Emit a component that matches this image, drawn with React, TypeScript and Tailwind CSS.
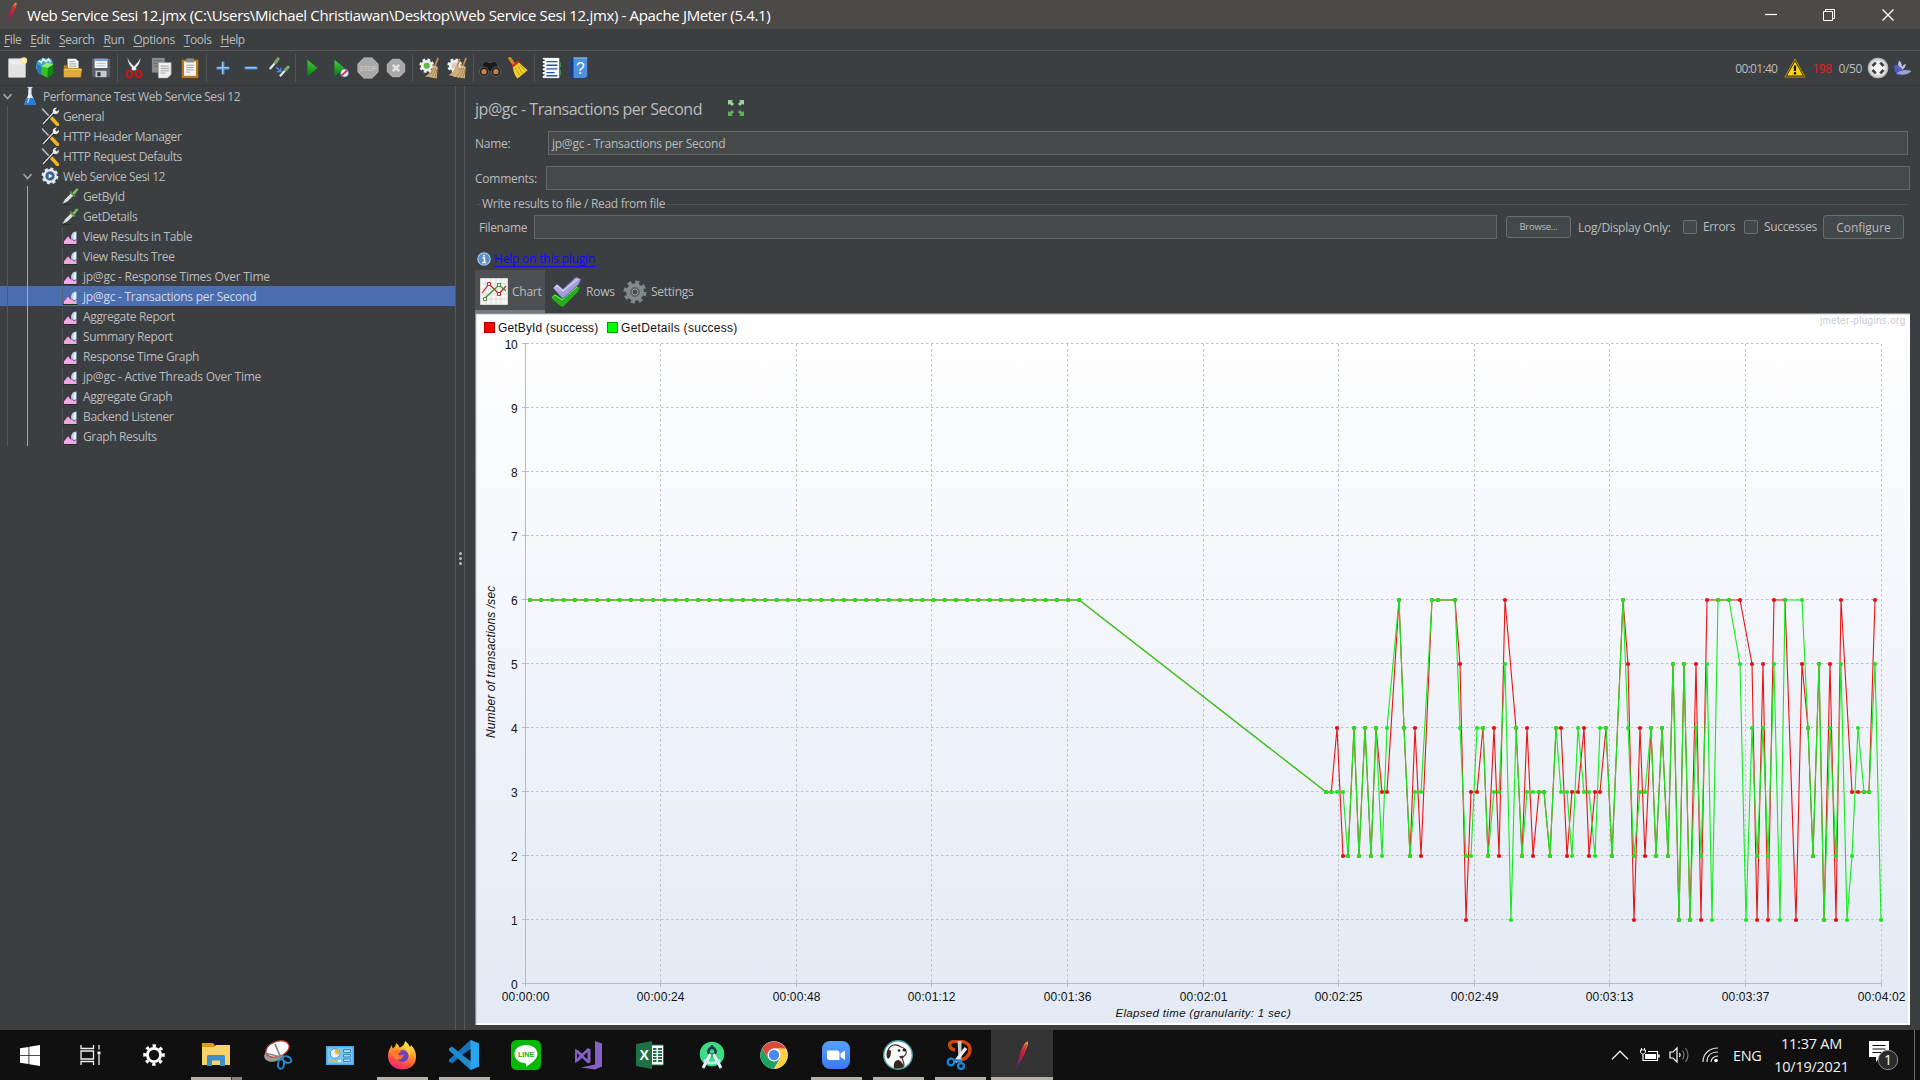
import React from "react";
import type { ReactNode } from "react";

type P = { w?: number; h?: number; box?: string; children?: ReactNode; cls?: string };
const Svg = ({ w = 24, h = 24, box = "0 0 24 24", children, cls = "" }: P) => (
  <svg width={w} height={h} viewBox={box} fill="none" className={"block shrink-0 " + cls}>
    {children}
  </svg>
);

/* ---------- Gradients shared by the icons ---------- */
const Defs = () => (
  <svg width="0" height="0" className="absolute">
    <defs>
      <linearGradient id="feather" x1="0.8" y1="0" x2="0.2" y2="1">
        <stop offset="0" stopColor="#f69923" />
        <stop offset="0.35" stopColor="#e0273a" />
        <stop offset="0.65" stopColor="#be202e" />
        <stop offset="1" stopColor="#6b2f86" />
      </linearGradient>
      <linearGradient id="green" x1="0" y1="0" x2="0" y2="1">
        <stop offset="0" stopColor="#3fcf3a" />
        <stop offset="1" stopColor="#0a7a12" />
      </linearGradient>
      <linearGradient id="fox" x1="0.7" y1="0" x2="0.3" y2="1">
        <stop offset="0" stopColor="#fff14a" />
        <stop offset="0.4" stopColor="#ff9a28" />
        <stop offset="0.75" stopColor="#ff4a45" />
        <stop offset="1" stopColor="#e8257a" />
      </linearGradient>
      <linearGradient id="zoom" x1="0" y1="0" x2="0" y2="1">
        <stop offset="0" stopColor="#5aa0ff" />
        <stop offset="1" stopColor="#3a7af2" />
      </linearGradient>
      <linearGradient id="plot" x1="0" y1="0" x2="0" y2="1">
        <stop offset="0" stopColor="#ffffff" />
        <stop offset="1" stopColor="#e3eaf5" />
      </linearGradient>
      <linearGradient id="lilac" x1="0" y1="0" x2="1" y2="1">
        <stop offset="0" stopColor="#c9c4ee" />
        <stop offset="1" stopColor="#8b84c8" />
      </linearGradient>
      <radialGradient id="silver">
        <stop offset="0.5" stopColor="#f4f4f4" />
        <stop offset="0.85" stopColor="#cfcfcf" />
        <stop offset="1" stopColor="#8e8e8e" />
      </radialGradient>
    </defs>
  </svg>
);

const Feather = ({ w, h }: { w: number; h: number }) => (
  <Svg w={w} h={h} box="0 0 14 32">
    <path d="M13.500 0.500C10.500 1 7.500 6 5.500 12 4 17 2.300 22 2 26 5 24 8.500 18 10.500 12 12 8 14.500 3.500 13.500 0.500Z" fill="url(#feather)" />
    <path d="M12 4C9 10 5 18 3 25L0.800 31" stroke="#7a2a60" strokeWidth="0.900" />
  </Svg>
);

/* ---------- Toolbar icons ---------- */
const NewDoc = () => (
  <Svg>
    <path d="M3 2h18v20H3z" fill="#ededed" stroke="#cfcfcf" />
    <path d="M4 8h16v13H4z" fill="#e2e2e2" />
    <circle cx="19.500" cy="4" r="3.600" fill="#f3ea8d" />
    <circle cx="19.500" cy="4" r="1.500" fill="#fffde0" />
  </Svg>
);
const Templates = () => (
  <Svg>
    <path d="M3 5l6-4 10 1 2 5-3 9-12 3-4-7z" fill="#3f9ed8" />
    <path d="M5 4l3 2 2-4 3 3 3-3 2 4" stroke="#e9f2dd" strokeWidth="1.700" />
    <path d="M3 8l5 2v10l-4-3z" fill="#2777b5" />
    <path d="M8 10l7 2v11l-7-4z" fill="#35c11f" />
    <path d="M15 12l6-4v10l-6 5z" fill="#128a12" />
    <path d="M8 10l6-4 7 2-6 4z" fill="#8af06c" />
  </Svg>
);
const Open = () => (
  <Svg>
    <path d="M6 2h9l3 3v8H6z" fill="#f5f5f5" />
    <path d="M8 5h6M8 7.500h8M8 10h8" stroke="#999" />
    <path d="M2 9h4l1 3h14v10H2z" fill="#b87c1b" />
    <path d="M2 13h17l3 0-2 9H2z" fill="#e0a93c" />
    <path d="M2 13.500h19" stroke="#f6d283" />
  </Svg>
);
const Save = () => (
  <Svg>
    <path d="M2 2h20v20H4l-2-2z" fill="#555c66" />
    <path d="M5 2h14v10H5z" fill="#f4f6fa" />
    <path d="M5 2h14v2.500H5z" fill="#7aa3dc" />
    <path d="M7 7h10M7 9.500h10" stroke="#b5bac4" />
    <path d="M6 15h12v7H6z" fill="#c6c9ce" />
    <path d="M8 16.500h3.500V21H8z" fill="#30343b" />
  </Svg>
);
const Cut = () => (
  <Svg>
    <path d="M5 1c0 5 3 9 8 14l2-2C11 9 7 6 5 1Z" fill="#dfe2e6" />
    <path d="M19 1c0 5-3 9-8 14l-2-2C13 9 17 6 19 1Z" fill="#f5f6f7" />
    <ellipse cx="7" cy="18.500" rx="3" ry="3.600" stroke="#d31217" strokeWidth="2.300" transform="rotate(25 7 18.500)" />
    <ellipse cx="17" cy="18.500" rx="3" ry="3.600" stroke="#d31217" strokeWidth="2.300" transform="rotate(-25 17 18.500)" />
  </Svg>
);
const Copy = () => (
  <Svg>
    <path d="M1 1h14v16H1z" fill="#8b8b8b" />
    <path d="M3 4h9M3 7h9M3 10h6" stroke="#6c6c6c" />
    <path d="M8 6h14v13l-4 4H8z" fill="#eeeeee" stroke="#999" strokeWidth="0.700" />
    <path d="M10.500 10h9M10.500 12.500h9M10.500 15h9M10.500 17.500h5" stroke="#9b9b9b" />
  </Svg>
);
const Paste = () => (
  <Svg>
    <path d="M3 3h18v20H3z" fill="#b7791c" />
    <path d="M5.500 5h13v15.500h-13z" fill="#f4f4f4" />
    <path d="M8 1.500h8V6H8z" fill="#8d8d8d" />
    <path d="M8 9h8M8 11.500h8M8 14h8M8 16.500h4" stroke="#999" />
  </Svg>
);
const Plus = () => (
  <Svg>
    <path d="M5 12h14M12 5v14" stroke="#5d9be8" strokeWidth="3" />
    <path d="M6 11.600h12M11.600 6v12" stroke="#a6cdfb" strokeWidth="1" />
  </Svg>
);
const Minus = () => (
  <Svg>
    <path d="M5 12h14" stroke="#5d9be8" strokeWidth="3" />
    <path d="M6 11.600h12" stroke="#a6cdfb" />
  </Svg>
);
const Toggle = () => (
  <Svg>
    <path d="M2 13L9 5" stroke="#e3e8ea" strokeWidth="2.400" />
    <path d="M8 6l3-4" stroke="#7aa861" strokeWidth="3.400" strokeLinecap="round" />
    <path d="M13 21l7-8" stroke="#e3e8ea" strokeWidth="2.400" />
    <path d="M19 14l3-3" stroke="#7aa861" strokeWidth="3.400" strokeLinecap="round" />
    <path d="M9 11l4.500 4.500M14 11.500V16H9.500" stroke="#4b8cf0" strokeWidth="1.500" />
  </Svg>
);
const Play = () => (
  <Svg>
    <path d="M7 3l11 9-11 9.500z" fill="url(#green)" />
  </Svg>
);
const PlayNoPause = () => (
  <Svg>
    <path d="M6 3l11 9-11 9.500z" fill="url(#green)" />
    <circle cx="17" cy="17.500" r="4.300" fill="#e8eefb" stroke="#5e82cf" strokeWidth="0.800" />
    <path d="M14 20l6-5.500" stroke="#d9322f" strokeWidth="2" />
  </Svg>
);
const Stop = () => (
  <Svg>
    <path d="M7.500 1h9L23 7.500v9L16.500 23h-9L1 16.500v-9z" fill="#a9a9a9" stroke="#bbb" />
    <text x="12" y="15" textAnchor="middle" fontSize="7.500" fontWeight="700" fontFamily="Liberation Sans, sans-serif" fill="#c4c4c4">STOP</text>
  </Svg>
);
const Shutdown = () => (
  <Svg>
    <path d="M8 2.500h8l5.500 5.500v8L16 21.500H8L2.500 16V8z" fill="#a9a9a9" stroke="#bbb" />
    <path d="M8.500 8.500l7 7M15.500 8.500l-7 7" stroke="#e4e4e4" strokeWidth="2.800" />
  </Svg>
);
const GearBroom = ({ two = false }: { two?: boolean }) => (
  <Svg>
    <circle cx="9.500" cy="9.500" r="6.300" fill="#e9e9e9" stroke="#efefef" strokeWidth="3.500" strokeDasharray="2.700 2.250" />
    <circle cx="9.500" cy="9.500" r="3.300" fill={two ? "#d9cdb4" : "#5cba3f"} />
    <path d="M22 1l-3.500 9" stroke="#b98c4f" strokeWidth="2" />
    {two && <path d="M15 2l-3 9" stroke="#b98c4f" strokeWidth="2" />}
    {two && <path d="M11 9l4 1.500-1 12-11-3c4-2 7-6 8-10.500Z" fill="#cfae7d" />}
    <path d="M16.500 9l5 1.500-1 13-13-2.500c5-2 8-7 9-12Z" fill="#d3b483" />
    <path d="M17 12c-1 4-3 7-6 9.500M19 12c-.5 4-2 7-4 10M21 13l-2.500 9.500" stroke="#94713f" strokeWidth="0.800" />
  </Svg>
);
const Binoculars = () => (
  <Svg>
    <path d="M4 8c1-4 5-4 6-2h4c1-2 5-2 6 2l3 8H1z" fill="#17191b" stroke="#5c5f61" strokeWidth="0.800" />
    <circle cx="5.500" cy="16" r="5" fill="#1c1e20" stroke="#777" strokeWidth="0.700" />
    <circle cx="18.500" cy="16" r="5" fill="#1c1e20" stroke="#777" strokeWidth="0.700" />
    <circle cx="5.500" cy="16" r="2.900" fill="#c87f50" />
    <circle cx="18.500" cy="16" r="2.900" fill="#c87f50" />
  </Svg>
);
const Broom = () => (
  <Svg>
    <path d="M3 1.500l5 7" stroke="#d98a1b" strokeWidth="3.400" strokeLinecap="round" />
    <path d="M6.500 9.500l6-4 10 9-11 9c-3-3-5-8.500-5-14Z" fill="#f2cf2c" />
    <path d="M9 12l5 8M12 10l5 8M14 8l6 7" stroke="#b98d0f" strokeWidth="0.900" />
    <path d="M5.500 10.500l7.500-6" stroke="#d92a1c" strokeWidth="2.600" />
  </Svg>
);
const LogList = () => (
  <Svg>
    <path d="M3 1h18v22H3z" fill="#f7f9fd" />
    <path d="M7 5h12M7 9h12M7 13h12M7 17h9M7 20.500h12" stroke="#2b50a8" strokeWidth="1.500" />
    <path d="M1.500 3.500h3.500M1.500 7.500h3.500M1.500 11.500h3.500M1.500 15.500h3.500M1.500 19.500h3.500" stroke="#20242b" strokeWidth="1.500" />
    <path d="M22 6v5M22 14v6" stroke="#2f9e4c" strokeWidth="1.600" />
  </Svg>
);
const HelpBook = () => (
  <Svg>
    <path d="M2 1h19v20l-3 2H2z" fill="#4f8fe0" />
    <path d="M2 1h4v22H2z" fill="#1c3f80" />
    <path d="M6 1h15" stroke="#a9ceff" />
    <text x="13.300" y="18" textAnchor="middle" fontSize="17" fontFamily="Liberation Sans, sans-serif" fill="#fff">?</text>
  </Svg>
);

const toolGroups: ReactNode[][] = [
  [<NewDoc />, <Templates />, <Open />, <Save />],
  [<Cut />, <Copy />, <Paste />],
  [<Plus />, <Minus />, <Toggle />],
  [<Play />, <PlayNoPause />, <Stop />, <Shutdown />],
  [<GearBroom />, <GearBroom two />],
  [<Binoculars />, <Broom />],
  [<LogList />, <HelpBook />],
];

/* ---------- Tree ---------- */
const Flask = () => (
  <Svg w={16} h={20} box="0 0 16 20">
    <path d="M6.500 2v6L2.500 17.500q0 1.500 1.500 1.500h8q1.500 0 1.500-1.500L9.500 8V2z" fill="#dfe9f5" />
    <path d="M5 12L2.500 17.500q0 1.500 1.500 1.500h8q1.500 0 1.500-1.500L11 12z" fill="#1f7fe0" />
    <path d="M5.500 1.500h5" stroke="#c6d3e0" strokeWidth="1.200" />
    <path d="M7 4v9l-1.500 4" stroke="#fff" strokeWidth="0.900" />
  </Svg>
);
const Wrench = () => (
  <Svg w={18} h={19} box="0 0 18 19">
    <path d="M1.500 2.500L9 10" stroke="#4b4d50" strokeWidth="2.600" />
    <path d="M1 1.500L9 10" stroke="#b9bdc2" strokeWidth="1.400" />
    <path d="M10.500 11l6 6.500" stroke="#f2b51d" strokeWidth="3.400" strokeLinecap="round" />
    <path d="M2 17L13 5" stroke="#1b1c1e" strokeWidth="3" />
    <path d="M2 17L13 5" stroke="#d6d9dc" strokeWidth="1.500" />
    <path d="M12 5.500c-1-3 1-5 4-5l-2 2.300 1.500 1.700L18 3c.3 3-2 4.500-5 4Z" fill="#eceef0" />
  </Svg>
);
const ThreadGear = () => (
  <Svg w={18} h={18} box="0 0 18 18">
    <circle cx="9" cy="9" r="6.700" stroke="#dfe4ea" strokeWidth="3.400" strokeDasharray="2.900 2.360" />
    <circle cx="9" cy="9" r="5.900" fill="#8fa6c8" stroke="#e8ecf0" strokeWidth="2" />
    <circle cx="9" cy="9" r="3.800" fill="#3e67a8" stroke="#24477c" strokeWidth="0.800" />
    <path d="M7.800 6.800l3.600 2.200-3.600 2.200z" fill="#fff" />
  </Svg>
);
const Pipette = () => (
  <Svg w={18} h={18} box="0 0 18 18">
    <path d="M1 17l3-5 6-6 2.500 2.500-6 6z" fill="#d9dee0" />
    <path d="M1 17l2.500-4.500 6-6" stroke="#4f5356" strokeWidth="0.900" />
    <path d="M9 4.500l5 5" stroke="#5d8a4a" strokeWidth="1.800" />
    <path d="M11 6L15 1.800q2-1 2.300.8.200 1-4.300 5.400z" fill="#83b56b" stroke="#3e6b2e" strokeWidth="0.500" />
    <path d="M1 17.500h9" stroke="#26282a" strokeWidth="0.800" />
  </Svg>
);
const Listener = () => (
  <Svg w={16} h={18} box="0 0 16 18">
    <path d="M0.500 1v16.500" stroke="#5a5d5f" strokeDasharray="1.500 1" />
    <path d="M1 17.500h14.500" stroke="#2a2b2d" />
    <path d="M2 17v-3l4-5 3 3.500 2-1.500 3.500 2v4z" fill="#f0a9e2" />
    <path d="M2 14l4-5 3 3.500" stroke="#7b2f70" strokeWidth="0.700" />
    <path d="M14.500 4.500v8.500l-2.500 1-2.800-2C8.500 8 10.500 4.500 14.500 4.500Z" fill="#bcd3ee" />
    <path d="M14 5.500v6l-2 1C10.700 9 12 6 14 5.500Z" fill="#eef5fc" />
    <path d="M9.200 11.500l2.800 2.500 2.500-1.500" stroke="#4766ab" strokeWidth="0.900" />
  </Svg>
);
const Chevron = () => (
  <Svg w={11} h={7} box="0 0 11 7">
    <path d="M1.500 1.200l4 4.300 4-4.300" stroke="#9da0a2" strokeWidth="1.700" />
  </Svg>
);

type Node = { depth: 0 | 1 | 2; label: string; icon: ReactNode; open?: boolean; selected?: boolean };
const tree: Node[] = [
  { depth: 0, label: "Performance Test Web Service Sesi 12", icon: <Flask />, open: true },
  { depth: 1, label: "General", icon: <Wrench /> },
  { depth: 1, label: "HTTP Header Manager", icon: <Wrench /> },
  { depth: 1, label: "HTTP Request Defaults", icon: <Wrench /> },
  { depth: 1, label: "Web Service Sesi 12", icon: <ThreadGear />, open: true },
  { depth: 2, label: "GetById", icon: <Pipette /> },
  { depth: 2, label: "GetDetails", icon: <Pipette /> },
  { depth: 2, label: "View Results in Table", icon: <Listener /> },
  { depth: 2, label: "View Results Tree", icon: <Listener /> },
  { depth: 2, label: "jp@gc - Response Times Over Time", icon: <Listener /> },
  { depth: 2, label: "jp@gc - Transactions per Second", icon: <Listener />, selected: true },
  { depth: 2, label: "Aggregate Report", icon: <Listener /> },
  { depth: 2, label: "Summary Report", icon: <Listener /> },
  { depth: 2, label: "Response Time Graph", icon: <Listener /> },
  { depth: 2, label: "jp@gc - Active Threads Over Time", icon: <Listener /> },
  { depth: 2, label: "Aggregate Graph", icon: <Listener /> },
  { depth: 2, label: "Backend Listener", icon: <Listener /> },
  { depth: 2, label: "Graph Results", icon: <Listener /> },
];

const TreeRow = ({ n }: { n: Node }) => (
  <div className={"flex h-5 items-center " + (n.selected ? "bg-[#4b6eaf] text-[#d3d9e6]" : "")}>
    {n.depth === 0 && <span className="flex w-[20px] justify-center pr-[5px]"><Chevron /></span>}
    {n.depth > 0 && <span className="ml-[7px] h-5 w-[13px] border-l border-[#55585a]" />}
    {n.depth === 1 && <span className="flex w-[20px] justify-center pr-[5px]">{n.open && <Chevron />}</span>}
    {n.depth === 2 && <span className="ml-[7px] h-5 w-[33px] border-l border-[#7db4e6]" />}
    <span className="flex w-[20px] justify-center">{n.icon}</span>
    <span
      className={
        "ml-[3px] whitespace-nowrap pt-[2px] " +
        (n.depth < 2 ? "tracking-[-0.42px]" : n.label.startsWith("jp@gc") ? "tracking-[-0.25px]" : "tracking-[-0.36px]")
      }
    >
      {n.label}
    </span>
  </div>
);

/* ---------- Chart ---------- */
const steady: [number, number][] = Array.from({ length: 50 }, (_, i) => [530 + i * 11.21, 6]);
const parse = (s: string): [number, number][] =>
  s.split(" ").map((p) => {
    const [x, v] = p.split(":").map(Number);
    return [1300 + x / 3, v];
  });

const getDetails = parse(
  "78:3 94:3 111:3 129:3 144:2 162:4 177:2 195:4 213:2 228:4 246:2 261:4 297:6 312:4 330:2 345:3 363:3 396:6 414:6 465:6 480:4 498:2 513:2 531:4 549:4 564:2 582:3 597:3 615:5 633:1 648:4 666:2 681:3 699:3 717:3 732:3 750:2 768:4 783:3 801:3 816:2 834:4 852:3 867:3 885:2 900:4 918:4 936:2 969:6 984:4 1002:2 1020:3 1035:3 1053:4 1068:2 1086:4 1104:2 1119:5 1137:1 1152:5 1170:1 1188:4 1203:2 1221:5 1236:1 1254:6 1287:6 1320:5 1338:1 1356:4 1371:2 1389:4 1404:2 1422:5 1440:1 1455:6 1506:6 1524:4 1539:2 1557:5 1572:1 1590:4 1608:2 1623:5 1641:1 1656:2 1674:4 1692:3 1707:3 1725:5 1743:1"
);
const getById = parse(
  "78:3 94:3 111:4 129:2 144:2 162:4 177:2 195:4 213:2 228:4 246:3 261:3 297:6 312:4 330:2 345:4 363:2 396:6 414:6 465:6 480:5 498:1 513:3 531:3 549:4 564:2 582:4 597:2 615:6 648:4 666:2 681:4 699:2 717:3 732:3 750:2 768:4 783:4 801:2 816:3 834:3 852:4 867:2 885:3 900:3 918:4 936:2 969:6 984:5 1002:1 1020:4 1035:2 1053:4 1068:2 1086:4 1104:2 1119:5 1137:1 1152:5 1170:1 1188:5 1203:1 1221:6 1254:6 1287:6 1320:6 1356:5 1371:1 1389:5 1404:1 1422:6 1455:6 1488:1 1506:5 1524:4 1539:2 1557:5 1572:1 1590:5 1608:1 1623:6 1656:3 1674:3 1692:3 1707:3 1725:6"
);

const Y = (v: number) => 984 - v * 64;
const xTicks = ["00:00:00", "00:00:24", "00:00:48", "00:01:12", "00:01:36", "00:02:01", "00:02:25", "00:02:49", "00:03:13", "00:03:37", "00:04:02"];
const tickX = [525.5, 660.5, 796.5, 931.5, 1067.5, 1203.5, 1338.5, 1474.5, 1609.5, 1745.5, 1881.5];

const Series = ({ pts, color, dot }: { pts: [number, number][]; color: string; dot: string }) => (
  <g>
    <polyline points={pts.map(([x, v]) => `${x},${Y(v)}`).join(" ")} fill="none" stroke={color} strokeWidth="1.100" />
    {pts.map(([x, v], i) => (
      <circle key={i} cx={x} cy={Y(v)} r="2.100" fill={dot} />
    ))}
  </g>
);

const Chart = () => (
  <svg width="1435" height="712" viewBox="475 313 1435 712" className="block" fontFamily="Liberation Sans, Arial, sans-serif" fontSize="12" fill="#111">
    <rect x="475" y="313" width="1435" height="712" fill="#ffffff" />
    <rect x="476" y="314" width="1432" height="709" fill="url(#plot)" />
    <path d="M475.500 1025V313.500H1910" stroke="#8c8f91" fill="none" strokeWidth="1.500" />
    <rect x="484.500" y="322.500" width="10" height="10" fill="#f00" stroke="#b00000" />
    <text x="498" y="332" textLength="100">GetById (success)</text>
    <rect x="607.500" y="322.500" width="10" height="10" fill="#0f0" stroke="#00a000" />
    <text x="621" y="332" textLength="116">GetDetails (success)</text>
    <text x="1820" y="323.500" fontSize="10" fill="#c9cbd1" textLength="85">jmeter-plugins.org</text>
    <g stroke="#bcc1cc" strokeDasharray="2.500 2.500">
      {Array.from({ length: 10 }, (_, i) => (
        <path key={i} d={`M526 ${343.5 + i * 64}H1881`} />
      ))}
      {tickX.slice(1).map((x) => (
        <path key={x} d={`M${x} 344V983`} />
      ))}
    </g>
    <g stroke="#b4bcc6">
      <path d="M525.500 344V987M522 983.500H1882" />
      {Array.from({ length: 10 }, (_, i) => (
        <path key={i} d={`M522 ${343.5 + i * 64}H529`} />
      ))}
      {tickX.slice(1).map((x) => (
        <path key={x} d={`M${x} 980V987`} />
      ))}
    </g>
    {Array.from({ length: 11 }, (_, i) => (
      <text key={i} x="517.500" y={988.5 - i * 64} textAnchor="end">{i}</text>
    ))}
    {xTicks.map((t, i) => (
      <text key={t} x={tickX[i]} y="1001" textAnchor="middle" textLength="47.500">{t}</text>
    ))}
    <text x="1115.500" y="1017" fontSize="11.500" fontStyle="italic" textLength="175">Elapsed time (granularity: 1 sec)</text>
    <text transform="translate(495 738) rotate(-90)" fontStyle="italic" textLength="152">Number of transactions /sec</text>
    <Series pts={[...steady, ...getById]} color="#ea1414" dot="#e80c14" />
    <Series pts={[...steady, ...getDetails]} color="#14ea1c" dot="#18e81c" />
  </svg>
);

/* ---------- Small panel icons ---------- */
const Expand = () => (
  <Svg w={18} h={18} box="0 0 18 18" cls="-mt-[3px]">
    <path d="M1 1h5L4.700 2.500 7 5 5 7 2.500 4.700 1 6zM17 1h-5l1.300 1.500L11 5l2 2 2.500-2.300L17 6z" fill="#93d68c" />
    <path d="M1 17h5l-1.300-1.500L7 13l-2-2-2.500 2.300L1 12zM17 17h-5l1.300-1.500L11 13l2-2 2.500 2.300L17 12z" fill="#5fb25a" />
  </Svg>
);
const Info = () => (
  <Svg w={14} h={14} box="0 0 14 14">
    <circle cx="7" cy="7" r="6.200" fill="#5b8ec9" stroke="#a6c6ea" strokeWidth="1.200" />
    <path d="M5.500 6h2v4.500M5.200 10.500h4" stroke="#fff" strokeWidth="1.400" />
    <circle cx="7" cy="3.700" r="1" fill="#fff" />
  </Svg>
);
const ChartIcon = () => (
  <Svg w={28} h={27} box="0 0 28 27">
    <path d="M0.500 0.500h27v26H0.500z" fill="#f6f6f4" stroke="#d8d8d8" />
    <path d="M6 1v25M11 1v25M16 1v25M21 1v25M1 6h26M1 11h26M1 16h26M1 21h26" stroke="#dcdcdc" />
    <path d="M2 15l7-9 10 10 7-8" stroke="#c8282c" strokeWidth="1.200" />
    <path d="M4 21L19 7l7 6" stroke="#3a8a2e" strokeWidth="1.200" />
    <g fill="#fff">
      <path d="M7.500 4.500h3v3h-3zM17.500 14.500h3v3h-3z" stroke="#c8282c" />
      <path d="M3.500 19.500h3v3h-3zM17.500 5.500h3v3h-3z" stroke="#3a8a2e" />
    </g>
  </Svg>
);
const Checks = () => (
  <Svg w={32} h={32} box="0 0 32 32">
    <path d="M1 22l4-4 7 4L26 9l4 3-2 4-15 15-3-1z" fill="#27ad1c" stroke="#12700d" strokeWidth="0.700" />
    <path d="M2.500 21l2.500-2 7 5L27 11" stroke="#8fe681" />
    <path d="M3 12l4-4 6 5L26 1l5 2-2 5-15 14-2 0z" fill="url(#lilac)" stroke="#5a5496" strokeWidth="0.700" />
    <path d="M5 11l2-1.500 6 5.500L28 3" stroke="#e6e3fb" />
  </Svg>
);
const SettingsGear = () => (
  <Svg w={24} h={24} box="0 0 24 24">
    <circle cx="12" cy="12" r="9.600" stroke="#7f8788" strokeWidth="4" strokeDasharray="3.900 3.640" />
    <circle cx="12" cy="12" r="6.300" stroke="#828a8b" strokeWidth="5" />
    <circle cx="12" cy="12" r="4.600" stroke="#5e6667" strokeWidth="1" />
    <circle cx="12" cy="12" r="3" stroke="#98a0a1" strokeWidth="1" fill="#4a4f51" />
  </Svg>
);

const Check = ({ label, cls = "" }: { label: string; cls?: string }) => (
  <label className={"flex items-center " + cls}>
    <span className="h-[14px] w-[14px] rounded-[2px] border border-[#6b6f71] bg-[#43494a]" />
    <span className="ml-[6px] whitespace-nowrap tracking-[-0.35px]">{label}</span>
  </label>
);

/* ---------- Taskbar icons ---------- */
const WinLogo = () => (
  <Svg w={20} h={21} box="0 0 20 21">
    <path d="M0 3.200l8.500-1.300v8.100H0zM9.300 1.800L20 0v10H9.300zM0 10.800h8.500V19L0 17.700zM9.300 10.800H20V21L9.300 19.200z" fill="#fff" />
  </Svg>
);
const TaskView = () => (
  <Svg w={21} h={20} box="0 0 21 20">
    <path d="M1 0v3.500h12.500V0M1 20v-3.500h12.500V20M1 6h12.500v8H1zM19 0v4.500M19 10v10" stroke="#eee" strokeWidth="1.300" />
    <path d="M17.500 6.500h3v3h-3z" fill="#fff" />
  </Svg>
);
const Gear = () => (
  <Svg w={24} h={24}>
    <circle cx="12" cy="12" r="9.300" stroke="#fff" strokeWidth="3" strokeDasharray="3.300 4.004" transform="rotate(-10 12 12)" />
    <circle cx="12" cy="12" r="6.600" stroke="#fff" strokeWidth="2.900" />
  </Svg>
);
const Explorer = () => (
  <Svg w={28} h={24} box="0 0 28 24">
    <path d="M0 0h11l2 2.500V6H0z" fill="#dd9b12" />
    <path d="M0 4h12l2-2h14v20H0z" fill="#fbd365" />
    <path d="M5 23V13.500q0-1.500 1.500-1.500h15q1.500 0 1.500 1.500V23h-5v-5.500h-8V23z" fill="#3b8fd0" />
  </Svg>
);
const Snip = () => (
  <Svg w={30} h={30} box="0 0 30 30">
    <ellipse cx="11" cy="15" rx="10" ry="6.500" fill="#9a9a9a" transform="rotate(-15 11 15)" />
    <ellipse cx="14.500" cy="9" rx="12" ry="7.500" fill="#fff" stroke="#c23b36" strokeWidth="1.200" transform="rotate(-20 14.500 9)" />
    <path d="M12 4l6 14M2 13l16 4" stroke="#858585" strokeWidth="1.800" />
    <ellipse cx="18" cy="24" rx="3" ry="4.800" stroke="#2986cc" strokeWidth="2" transform="rotate(8 18 24)" />
    <ellipse cx="24" cy="19.500" rx="4.500" ry="3" stroke="#2986cc" strokeWidth="2" transform="rotate(25 24 19.500)" />
  </Svg>
);
const Card = () => (
  <Svg w={28} h={19} box="0 0 28 19">
    <path d="M0 0h28v19H0z" fill="#4aa9e6" />
    <path d="M1.500 1.500h25v16h-25z" fill="#7cc8f4" />
    <circle cx="9" cy="7.500" r="4.800" fill="#e8f2f8" stroke="#3b80b8" strokeWidth="0.800" />
    <path d="M9 7.500V2.700a4.800 4.800 0 0 1 4.500 6.300z" fill="#f0b43a" />
    <path d="M17.500 3.500h7v3h-7zM17.500 8.500h7v2.500h-7zM17.500 13h7v2.500h-7z" fill="#a5defc" stroke="#2c7cba" strokeWidth="0.900" />
    <path d="M4 15h7" stroke="#f0b43a" strokeWidth="1.600" />
    <path d="M12 15h3" stroke="#fff" strokeWidth="1.600" />
  </Svg>
);
const Firefox = () => (
  <Svg w={30} h={30} box="0 0 30 30">
    <path d="M18 1c3 2 4 4 5 6 1-1 1-2 1-2 4 4 5 8 5 12 0 8-6 12.500-14 12.500S1 24 1 16c0-5 2-8 4-11 0 2 .5 3 1 3.500C8 7 9 5 9 3c2 1 3 3 3.500 4.500C15 7 18 4 18 1Z" fill="url(#fox)" />
    <circle cx="15.500" cy="16" r="6" fill="#6d3fc4" />
    <path d="M6 11c3-1 6-1 9 1-2 0-4 1-3.500 3 2 1 4 0 5-1 0 4-3 6-6 5.500-3 0-5-4-4.500-8.500Z" fill="#ff7a2c" />
    <path d="M16 8c4 1 6 4 6 8 3-4 1-9-3-11z" fill="#ffd43d" />
  </Svg>
);
const VsCode = () => (
  <Svg w={30} h={30} box="0 0 30 30">
    <path d="M21.500 0L30 3.500v23L21.500 30 9 18.500 3 23.500 0 21.500v-2L15 6z" fill="#1573b9" />
    <path d="M0 10.500v-2l3-2 19 15.500v8L9 18.500z" fill="#2489ca" />
    <path d="M21.500 0L30 3.500v23L21.500 30z" fill="#29a3ef" />
    <path d="M21.500 9v12L13.500 15z" fill="#101010" />
  </Svg>
);
const Line = () => (
  <Svg w={30} h={30} box="0 0 30 30">
    <rect width="30" height="30" rx="5.500" fill="#06b806" />
    <path d="M15 5c6.500 0 11.500 3.800 11.500 9 0 5-7 10-11.500 12.500.5-2 0-3-1-3.200C7.500 22.500 3.500 18.500 3.500 14 3.500 8.800 8.500 5 15 5Z" fill="#fff" />
    <text x="15" y="16.800" textAnchor="middle" fontSize="7.200" fontWeight="700" fontFamily="Liberation Sans, sans-serif" fill="#06b806" textLength="16">LINE</text>
  </Svg>
);
const VisualStudio = () => (
  <Svg w={30} h={30} box="0 0 30 30">
    <path d="M22 1l7 2.500v23L22 29.500 8 27.500l14-3z" fill="#8661c5" />
    <path d="M2 9l3 1.200 4 3.300 6-5.500 2.500 1.200v13L15 23.500 9 18l-4 3.500-3 1.200z" fill="#8661c5" />
    <path d="M4 13v5.500l2.700-2.700zM14.500 12v7.500l-4-3.700z" fill="#101010" />
  </Svg>
);
const Excel = () => (
  <Svg w={28} h={28} box="0 0 28 28">
    <path d="M14 4h13.500v20H14z" fill="#fff" stroke="#1e7145" />
    <path d="M17 8h3.500M22 8h4M17 11h3.500M22 11h4M17 14h3.500M22 14h4M17 17h3.500M22 17h4M17 20h3.500M22 20h4" stroke="#1e7145" strokeWidth="2" />
    <path d="M0 3l16-3v28L0 25z" fill="#1e7145" />
    <text x="8" y="19" textAnchor="middle" fontSize="14" fontWeight="700" fontFamily="Liberation Sans, sans-serif" fill="#fff">X</text>
  </Svg>
);
const Android = () => (
  <Svg w={26} h={28} box="0 0 26 28">
    <circle cx="13" cy="13" r="12.300" fill="#3ddc84" />
    <path d="M13 4v4" stroke="#073042" strokeWidth="2.200" />
    <circle cx="13" cy="10.500" r="3.600" fill="#3ddc84" stroke="#0f3b4c" strokeWidth="2.600" />
    <path d="M11.500 13L4 27M14.500 13L22 27" stroke="#e9eff5" strokeWidth="3" />
    <path d="M5 19c5 4 11 4 16 0" stroke="#c9e6f7" strokeWidth="2.600" />
  </Svg>
);
const Chrome = () => (
  <Svg w={28} h={28} box="0 0 28 28">
    <circle cx="14" cy="14" r="13.700" fill="#fff" />
    <path d="M2.100 7.100A13.800 13.800 0 0 0 14 27.800L20 17.500 14 14 8 17.500z" fill="#1da462" />
    <path d="M25.900 7.100A13.800 13.800 0 0 1 14 27.800L20 17.500 18 8z" fill="#ffce45" />
    <path d="M2.100 7.100A13.800 13.800 0 0 1 25.900 7.600H13L8 17.500z" fill="#dd4b3e" />
    <circle cx="14" cy="14" r="6.500" fill="#fff" />
    <circle cx="14" cy="14" r="5.200" fill="#4a8af4" />
  </Svg>
);
const ZoomApp = () => (
  <Svg w={28} h={28} box="0 0 28 28">
    <rect width="28" height="28" rx="8" fill="url(#zoom)" />
    <path d="M5 9.500h10q2.500 0 2.500 2.500v7h-10Q5 19 5 16.500zM18.500 12.500l4.500-3v9.500l-4.500-3z" fill="#fff" />
  </Svg>
);
const Dbeaver = () => (
  <Svg w={30} h={30} box="0 0 30 30">
    <circle cx="15" cy="15" r="14.300" fill="#fbfbfb" stroke="#4a9ba3" strokeWidth="1.400" />
    <path d="M5 11c1-6 8-8 13-4 4 1 6 4 5 7-1 2-3 3-4 4 1 3 2 4 2 8" stroke="#3b2a22" strokeWidth="1.100" />
    <path d="M11 28c-1-4 1-8 4-8 3 0 5 4 6 7-3 1.500-7 2-10 1Z" fill="#35261f" />
    <path d="M4.500 10c2-1 4 0 3.500 3s-1 5-3 6c-2-2-2-6-.5-9Z" fill="#3b2a22" />
    <circle cx="16" cy="10.500" r="1.300" fill="#222" />
    <ellipse cx="21.500" cy="10" rx="1.900" ry="1.500" fill="#222" />
    <path d="M16 16.500l4-1 .5 1.500-3 1.500z" fill="#3b2a22" />
  </Svg>
);
const SnipSketch = () => (
  <Svg w={28} h={30} box="0 0 28 30">
    <path d="M9 10C3 9 2 3 6 2c7-2.500 18 0 18 7 0 8-7 11-13 12" stroke="#d3430f" strokeWidth="3.400" />
    <path d="M11.500 1h4v19h-3z" fill="#c9c9c9" />
    <path d="M20 8L9 22" stroke="#ececec" strokeWidth="3.400" />
    <circle cx="5" cy="22" r="3.300" stroke="#1a86d8" strokeWidth="2.300" />
    <circle cx="15" cy="26" r="2.900" stroke="#1a86d8" strokeWidth="2.300" />
    <path d="M8 20l8 1" stroke="#1a86d8" strokeWidth="2.300" />
  </Svg>
);

const apps: { icon: ReactNode; running?: boolean; active?: boolean; stacked?: boolean }[] = [
  { icon: <Gear /> },
  { icon: <Explorer />, running: true, stacked: true },
  { icon: <Snip /> },
  { icon: <Card /> },
  { icon: <Firefox />, running: true },
  { icon: <VsCode />, running: true },
  { icon: <Line /> },
  { icon: <VisualStudio /> },
  { icon: <Excel /> },
  { icon: <Android /> },
  { icon: <Chrome /> },
  { icon: <ZoomApp />, running: true },
  { icon: <Dbeaver />, running: true },
  { icon: <SnipSketch />, running: true },
  { icon: <Feather w={14} h={29} />, running: true, active: true },
];

const Taskbar = () => (
  <footer className="flex h-[50px] bg-[#101010] text-[#f2f2f2]">
    <div className="flex w-[60px] items-center justify-center"><WinLogo /></div>
    <div className="flex w-[63px] items-center justify-center pr-[2px]"><TaskView /></div>
    {apps.map((a, i) => (
      <div key={i} className={"relative flex w-[62px] items-center justify-center " + (a.active ? "bg-[#333333]" : "")}>
        {a.icon}
        {a.running && (
          <span className={"absolute bottom-0 flex h-[3px] justify-end bg-[#b4b1ad] " + (a.active ? "w-full" : "w-[51px]")}>
            {a.stacked && <span className="h-[3px] w-[11px] border-l border-[#333] bg-[#85827f]" />}
          </span>
        )}
      </div>
    ))}
    <div className="ml-auto flex items-center">
      <Svg w={18} h={10} box="0 0 18 10"><path d="M1 9.200l8-8 8 8" stroke="#eee" strokeWidth="1.400" /></Svg>
      <Svg w={20} h={14} box="0 0 20 14" cls="ml-[11px]">
        <path d="M3 6.500V12.500h14.500v-9H8" stroke="#fff" strokeWidth="1.200" />
        <path d="M5 6h11v5H5z" fill="#fff" />
        <path d="M19 6.500v3" stroke="#fff" strokeWidth="1.500" />
        <path d="M0.500 2h5v2.500L3 6.500 0.500 4.500zM1.500 0v2M4.500 0v2" stroke="#fff" />
      </Svg>
      <Svg w={21} h={18} box="0 0 21 18" cls="ml-[9px]">
        <path d="M1 6h3l4-4v14l-4-4H1z" stroke="#fff" strokeWidth="1.200" />
        <path d="M10.500 7q1.300 2 0 4" stroke="#fff" strokeWidth="1.200" />
        <path d="M13.500 4.500q3 4.500 0 9M16.500 2q5 7 0 14" stroke="#777" strokeWidth="1.200" />
      </Svg>
      <Svg w={17} h={16} box="0 0 17 16" cls="ml-[12px]">
        <path d="M1 15C1 7 7 1 16 1M5 15C5 9 9 5 16 5M9 15c0-3.500 3-6 7-6" stroke="#ddd" strokeWidth="1.200" />
        <circle cx="14" cy="13.500" r="1.800" fill="#fff" />
      </Svg>
      <span className="ml-[14px] w-[29px] whitespace-nowrap pt-px text-[14.500px] tracking-[-0.4px]">ENG</span>
      <div className="ml-[12px] w-[75px] whitespace-nowrap text-center text-[14.500px] leading-[23px] tracking-[-0.25px]">
        <div>11:37 AM</div>
        <div>10/19/2021</div>
      </div>
      <Svg w={32} h={32} box="0 0 32 32" cls="ml-[19px] mt-[2px]">
        <path d="M1 1h20v16H12l-4 5v-5H1z" fill="#fff" />
        <path d="M4.500 5.500h13M4.500 9h13M4.500 12.500h9" stroke="#101010" strokeWidth="1.200" />
        <circle cx="20" cy="20" r="9.700" fill="#2b2b2b" stroke="#8a8a8a" strokeWidth="1" />
        <text x="20" y="25" textAnchor="middle" fontSize="14" fontFamily="Open Sans, sans-serif" fill="#fff">1</text>
      </Svg>
      <span className="ml-[14px] mr-[5px] h-[50px] w-px bg-[#6b6b6b]" />
    </div>
  </footer>
);

const field = "h-6 border border-[#646869] bg-[#45494a]";
const button = "flex items-center justify-center rounded-[3px] border border-[#6a6e70] bg-[#43494b]";
const menus = [
  ["F", "ile"],
  ["E", "dit"],
  ["S", "earch"],
  ["R", "un"],
  ["O", "ptions"],
  ["T", "ools"],
  ["H", "elp"],
];

export default function App() {
  return (
    <div className="flex h-[1080px] w-[1920px] flex-col overflow-hidden bg-[#3c3f41] font-['Open_Sans',sans-serif] text-[12px] leading-4 tracking-[-0.25px] text-[#bbbbbb]">
      <Defs />
      <header className="flex h-[29px] items-center bg-[#4c4a48] text-white">
        <span className="flex w-[27px] justify-center pb-[2px] pr-[5px]"><Feather w={11} h={24} /></span>
        <span className="whitespace-nowrap text-[15px] tracking-[-0.34px]">
          Web Service Sesi 12.jmx (C:\Users\Michael Christiawan\Desktop\Web Service Sesi 12.jmx) - Apache JMeter (5.4.1)
        </span>
        <div className="ml-auto flex items-center">
          <Svg w={12} h={12} box="0 0 12 12"><path d="M0 5.500h12" stroke="#fff" strokeWidth="1.200" /></Svg>
          <Svg w={12} h={12} box="0 0 12 12" cls="ml-[46px]"><path d="M0.500 2.500h9v9h-9zM2.500 2.500v-2h9v9h-2" stroke="#fff" /></Svg>
          <Svg w={12} h={12} box="0 0 12 12" cls="ml-[47px] mr-[26px]"><path d="M0.500 0.500l11 11M11.500 0.500l-11 11" stroke="#fff" strokeWidth="1.300" /></Svg>
        </div>
      </header>

      <nav className="flex h-[22px] items-center gap-[9px] border-b border-[#555859] pl-1 text-[12px] tracking-[-0.42px]">
        {menus.map(([a, b]) => (
          <span key={a} className="whitespace-nowrap"><u className="underline-offset-2">{a}</u>{b}</span>
        ))}
      </nav>

      <div className="flex h-[35px] items-center border-b border-[#323536] pl-[3px]">
        {toolGroups.map((g, i) => (
          <div key={i} className="flex items-center">
            {i > 0 && <span className="mx-[2px] h-[28px] w-px bg-[#525556]" />}
            {g.map((ic, j) => (
              <span key={j} className="flex w-[28px] justify-center [&>svg]:h-[22px] [&>svg]:w-[22px]">{ic}</span>
            ))}
          </div>
        ))}
        <div className="ml-auto flex items-center tracking-[-0.7px]">
          <span className="pt-px">00:01:40</span>
          <Svg w={22} h={20} box="0 0 22 20" cls="ml-[7px]">
            <path d="M11 1l10 18H1z" fill="#2a2508" stroke="#b89a10" />
            <path d="M11 3.500l7.800 14H3.200z" fill="#f8d312" />
            <path d="M11 7.500v5.500" stroke="#111" strokeWidth="2.200" />
            <circle cx="11" cy="15.300" r="1.300" fill="#111" />
          </Svg>
          <span className="ml-[6px] pt-px tracking-[-0.4px] text-[#e02020]">198</span>
          <span className="ml-[7px] pt-px tracking-[-0.4px]">0/50</span>
          <Svg w={22} h={22} box="0 0 22 22" cls="ml-[5px]">
            <circle cx="11" cy="11" r="10.500" fill="url(#silver)" />
            <path d="M5.500 9l3.300-3.300M13.200 5.700L16.500 9M5.500 13l3.300 3.300M13.200 16.300l3.300-3.300" stroke="#3c3f41" strokeWidth="2.600" />
          </Svg>
          <Svg w={18} h={16} box="0 0 18 16" cls="ml-[5px] mr-[8px]">
            <path d="M5 9C4 6 3.500 3 5.500 0.500 8 3 8 6 8 9zM7.500 9c.5-3 2-4.500 4.500-5C11.500 6.500 10 8.500 8.500 10z" fill="#b9c4f0" />
            <path d="M0.500 5c4 0 7 2 8 5l-5 5.500C1 13 0 9 0.500 5Z" fill="#4460cc" />
            <path d="M3 13c4-3 9-4 14.500-2-4 4-10 5-14.500 2.500z" fill="#96a3dd" />
            <path d="M3 6l6 4" stroke="#c9536d" />
          </Svg>
        </div>
      </div>

      <main className="flex min-h-0 flex-1">
        <aside className="w-[456px] border-r border-[#555859]">
          {tree.map((n, i) => <TreeRow key={i} n={n} />)}
        </aside>
        <div className="flex w-[9px] flex-col items-center justify-center gap-[2px] border-r border-[#555859]">
          <span className="h-[3px] w-[3px] rounded-full bg-[#b8b8b8]" />
          <span className="h-[3px] w-[3px] rounded-full bg-[#b8b8b8]" />
          <span className="h-[3px] w-[3px] rounded-full bg-[#b8b8b8]" />
        </div>

        <section className="ml-[10px] flex w-[1435px] flex-col">
          <div className="mt-[10px] flex h-[26px] items-center">
            <span className="w-[252px] whitespace-nowrap text-[16px] tracking-[-0.46px]">jp@gc - Transactions per Second</span>
            <Expand />
          </div>
          <div className="mt-[9px] flex items-center pr-[2px]">
            <span className="w-[73px] pt-[2px]">Name:</span>
            <div className={"flex flex-1 items-center pl-[3px] pt-[2px] " + field}>jp@gc - Transactions per Second</div>
          </div>
          <div className="mt-[11px] flex items-center">
            <span className="w-[71px] pt-[2px]">Comments:</span>
            <div className={"flex-1 " + field} />
          </div>
          <div className="mt-[6px] flex h-4 items-center">
            <span className="ml-[2px] mr-[2px] h-px w-[3px] bg-[#505354]" />
            <span className="whitespace-nowrap tracking-[-0.3px]">Write results to file / Read from file</span>
            <span className="ml-[2px] mr-[2px] h-px flex-1 bg-[#505354]" />
          </div>
          <div className="mt-[3px] flex h-6 items-center pl-[4px]">
            <span className="w-[55px] pt-px tracking-[-0.35px]">Filename</span>
            <div className={"w-[963px] " + field} />
            <div className={"ml-[9px] h-[22px] w-[65px] text-[9.500px] " + button}>Browse...</div>
            <span className="ml-[7px] w-[105px] whitespace-nowrap pt-px">Log/Display Only:</span>
            <Check label="Errors" cls="w-[61px]" />
            <Check label="Successes" cls="w-[79px]" />
            <div className={"h-6 w-[81px] pt-px text-[12px] tracking-[0px] " + button}>Configure</div>
          </div>
          <div className="mt-[12px] flex h-4 items-center pl-[2px]">
            <Info />
            <span className="ml-[3px] border-b border-[#1212f0] leading-[15px] tracking-[-0.2px] text-[#1208f8]">Help on this plugin</span>
          </div>
          <div className="mt-[3px] flex h-[43px]">
            <div className="flex w-[70px] items-center bg-[#4c5052] pl-[5px] shadow-[inset_0_-3px_#747a80]">
              <ChartIcon />
              <span className="ml-[4px] pt-px">Chart</span>
            </div>
            <div className="flex items-center pl-[5px]">
              <Checks />
              <span className="ml-[4px] w-[37px] pt-px">Rows</span>
              <SettingsGear />
              <span className="ml-[4px] pt-px">Settings</span>
            </div>
          </div>
          <Chart />
        </section>
      </main>
      <Taskbar />
    </div>
  );
}
